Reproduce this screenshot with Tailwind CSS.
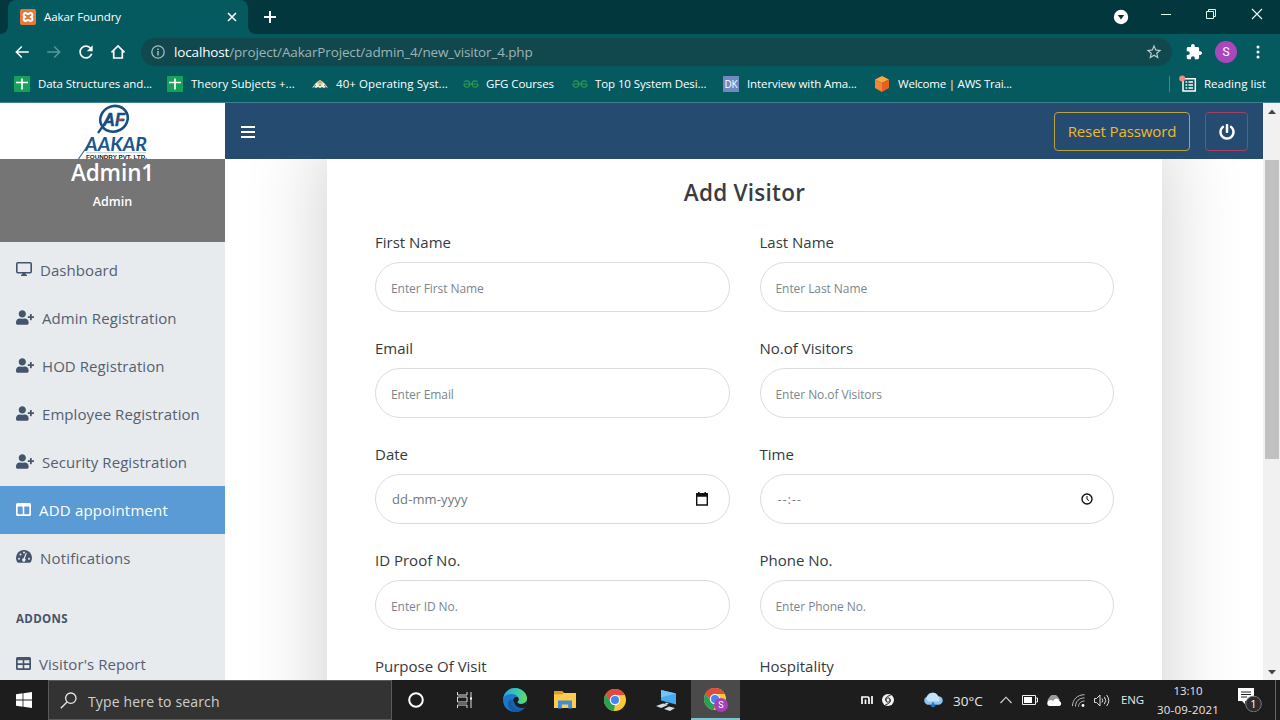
<!DOCTYPE html>
<html lang="en">
<head>
<meta charset="utf-8">
<title>Aakar Foundry</title>
<script src="https://cdn.jsdelivr.net/npm/@tailwindcss/browser@4"></script>
</head>
<body class="w-[1280px] h-[720px] overflow-hidden flex flex-col bg-white font-['Open_Sans',sans-serif]">

<svg class="hidden">
  <symbol id="userplus" viewBox="0 0 640 512"><path d="M624 208h-64v-64c0-8.800-7.200-16-16-16h-32c-8.800 0-16 7.200-16 16v64h-64c-8.800 0-16 7.200-16 16v32c0 8.800 7.200 16 16 16h64v64c0 8.800 7.200 16 16 16h32c8.800 0 16-7.200 16-16v-64h64c8.800 0 16-7.200 16-16v-32c0-8.800-7.200-16-16-16zm-400 48c70.700 0 128-57.300 128-128S294.700 0 224 0 96 57.300 96 128s57.300 128 128 128zm89.600 32h-16.700c-22.200 10.200-46.900 16-72.900 16s-50.600-5.800-72.900-16h-16.700C60.200 288 0 348.200 0 422.400V464c0 26.500 21.500 48 48 48h352c26.500 0 48-21.500 48-48v-41.600c0-74.200-60.200-134.400-134.400-134.400z"/></symbol>
  <symbol id="sheet" viewBox="0 0 16 16"><rect width="16" height="16" rx="1" fill="#17a05a"/><path d="M8 2.500v11M2 6.500h12" stroke="#fff" stroke-width="1.700"/></symbol>
  <symbol id="gfg" viewBox="0 0 16 8"><path d="M1.400 1.800C2 1.100 2.800.8 3.800.8 5.700.8 6.900 2 6.900 4S5.700 7.200 3.900 7.200 1 6 1 4h14M14.600 1.800C14 1.100 13.200.8 12.200.8 10.300.8 9.100 2 9.100 4s1.200 3.200 3 3.200S15 6 15 4" fill="none" stroke="#2f9a4d" stroke-width="1.200"/></symbol>
  <symbol id="chrome" viewBox="0 0 22 22"><circle cx="11" cy="11" r="11" fill="#fbc934"/><path d="M11 6h9.800A11 11 0 0 0 1.500 5.500L6 12z" fill="#df4b3f"/><path d="M1.500 5.500 7 13.500 11 16 9.800 22A11 11 0 0 1 1.500 5.500z" fill="#28a156"/><circle cx="11" cy="11" r="5.200" fill="#f5f5f5"/><circle cx="11" cy="11" r="4" fill="#4285f4"/></symbol>
</svg>

<!-- Tab strip -->
<div class="h-[34px] shrink-0 bg-[#02383d] flex text-white">
  <div class="w-2 flex items-end bg-[#055a60]"><div class="w-2 h-[34px] bg-[#02383d] rounded-br-lg"></div></div>
  <div class="w-[240px] h-[34px] bg-[#055a60] rounded-t-lg flex items-center pl-3 pr-[10px]">
    <svg class="w-4 h-4" viewBox="0 0 16 16"><rect width="16" height="16" rx="2" fill="#e9793a"/><path d="M5.300 8a2 2 0 1 1 2-3h1.400a2 2 0 1 1 2 3 2 2 0 1 1-2 3H7.300a2 2 0 1 1-2-3z" fill="none" stroke="#fff" stroke-width="2" stroke-linejoin="round"/></svg>
    <span class="ml-2 text-[11.500px] leading-4 tracking-[-0.1px]">Aakar Foundry</span>
    <svg class="ml-auto w-3 h-3" viewBox="0 0 12 12"><path d="M2 2l8 8M10 2l-8 8" stroke="#fff" stroke-width="1.600"/></svg>
  </div>
  <div class="w-2 bg-[#055a60]"><div class="w-2 h-[34px] bg-[#02383d] rounded-bl-lg"></div></div>
  <svg class="mt-[11px] ml-[8px] w-3 h-3" viewBox="0 0 12 12"><path d="M6 0v12M0 6h12" stroke="#fff" stroke-width="2"/></svg>
  <div class="ml-auto flex">
    <svg class="mt-[9px] w-4 h-4" viewBox="0 0 16 16"><circle cx="8" cy="8" r="7.200" fill="#fff"/><path d="M4.800 6h6.400L8 10.500z" fill="#02383d"/></svg>
    <svg class="mt-[9px] ml-[31px] w-3 h-3" viewBox="0 0 12 12"><path d="M1 5.500h10" stroke="#dfe" stroke-width="1"/></svg>
    <svg class="mt-[8px] ml-[33px] w-3 h-3" viewBox="0 0 12 12"><path d="M1.500 3.500h7v7h-7zM3.500 3.500v-2h7v7h-2" stroke="#dfe" fill="none"/></svg>
    <svg class="mt-[8px] ml-[34px] mr-[17px] w-3 h-3" viewBox="0 0 12 12"><path d="M1 1l10 10M11 1L1 11" stroke="#eff" stroke-width="1.100"/></svg>
  </div>
</div>

<!-- Toolbar -->
<div class="h-9 shrink-0 bg-[#055a60] flex items-center pl-[6px] text-white fill-white">
  <svg class="w-[18px] h-[18px] mx-[7px]" viewBox="0 0 24 24"><path d="M21 11H6.830l5.590-5.590L11 4l-8 8 8 8 1.410-1.410L6.830 13H21v-2z"/></svg>
  <svg class="w-[18px] h-[18px] mx-[7px] fill-[#5a979b]" viewBox="0 0 24 24"><path d="M3 11h14.170l-5.590-5.590L13 4l8 8-8 8-1.410-1.410L17.170 13H3v-2z"/></svg>
  <svg class="w-5 h-5 mx-[6px]" viewBox="0 0 24 24"><path d="M17.650 6.350C16.200 4.900 14.210 4 12 4c-4.420 0-7.990 3.580-7.990 8s3.570 8 7.990 8c3.730 0 6.840-2.550 7.730-6h-2.080c-.82 2.330-3.040 4-5.650 4-3.310 0-6-2.690-6-6s2.690-6 6-6c1.660 0 3.140.69 4.220 1.780L13 11h7V4l-2.350 2.350z"/></svg>
  <svg class="w-4 h-4 mx-2" viewBox="0 0 16 16"><path d="M1.500 8.300 8 2l6.500 6.300M3.700 7v7h8.600V7" fill="none" stroke="#fff" stroke-width="1.700"/></svg>
  <div class="w-[1031px] h-7 ml-[7px] rounded-full bg-[#11484e] flex items-center pl-[10px] pr-[9px]">
    <svg class="w-[14px] h-[14px]" viewBox="0 0 14 14"><circle cx="7" cy="7" r="6.200" fill="none" stroke="#a5bcbe" stroke-width="1.300"/><path d="M7 6v4.500M7 3.400v1.500" stroke="#a5bcbe" stroke-width="1.500"/></svg>
    <span class="ml-[9px] text-[13.500px] tracking-[-0.15px] leading-5 text-[#9db4b6] whitespace-nowrap"><span class="text-white">localhost</span>/project/AakarProject/admin_4/new_visitor_4.php</span>
    <svg class="ml-auto w-[18px] h-[18px] fill-[#b9cccd]" viewBox="0 0 24 24"><path d="M22 9.240l-7.190-.62L12 2 9.190 8.630 2 9.240l5.460 4.730L5.820 21 12 17.270 18.180 21l-1.630-7.030L22 9.240zM12 15.400l-3.760 2.270 1-4.280-3.320-2.880 4.380-.38L12 6.100l1.710 4.040 4.380.38-3.320 2.880 1 4.280L12 15.400z"/></svg>
  </div>
  <svg class="w-4 h-4 ml-[14px]" viewBox="1 1 22 22"><path d="M20.500 11H19V7c0-1.100-.9-2-2-2h-4V3.500C13 2.120 11.880 1 10.500 1S8 2.120 8 3.500V5H4c-1.100 0-1.990.9-1.990 2v3.800H3.500c1.490 0 2.700 1.210 2.700 2.700s-1.210 2.700-2.700 2.700H2V20c0 1.100.9 2 2 2h3.800v-1.500c0-1.490 1.210-2.700 2.700-2.700 1.490 0 2.700 1.210 2.700 2.700V22H17c1.100 0 2-.9 2-2v-4h1.500c1.380 0 2.500-1.120 2.500-2.500S21.880 11 20.500 11z"/></svg>
  <div class="w-[22px] h-[22px] ml-[13px] rounded-full bg-[#aa47bc] flex items-center justify-center text-[12px] font-[Roboto,sans-serif]">S</div>
  <svg class="w-4 h-4 ml-[13px]" viewBox="0 0 16 16"><circle cx="8" cy="3" r="1.500"/><circle cx="8" cy="8" r="1.500"/><circle cx="8" cy="13" r="1.500"/></svg>
</div>

<!-- Bookmarks -->
<div class="h-[33px] shrink-0 bg-[#055a60] border-b border-[#3f7f90] flex items-center pl-[14px] pb-[4px] text-white text-[11.500px] leading-4 whitespace-nowrap tracking-[-0.1px]">
  <div class="w-[153px] flex items-center gap-2"><svg class="w-4 h-4"><use href="#sheet"/></svg>Data Structures and...</div>
  <div class="w-[145px] flex items-center gap-2"><svg class="w-4 h-4"><use href="#sheet"/></svg><span class="tracking-[0px]">Theory Subjects +...</span></div>
  <div class="w-[151px] flex items-center gap-2"><svg class="w-4 h-4" viewBox="0 0 16 16"><path d="M0 12 3 8l2-2 3-2 3 2 2 2 3 4-2-1-2 1-2-1-2 1-2-1-2 1-2-1z" fill="#f1f1e8"/><path d="M5 7l3-2.500L11 7l-1.500 1L8 7 6.500 8z" fill="#e8a33c"/><path d="M2 10.500l2-1.500M7 10l1-1.500 1 1.500M12 9l2 1.500" stroke="#3c8a6a" fill="none"/></svg><span class="tracking-[0.08px]">40+ Operating Syst...</span></div>
  <div class="w-[109px] flex items-center gap-[7px]"><svg class="w-4 h-2"><use href="#gfg"/></svg>GFG Courses</div>
  <div class="w-[151px] flex items-center gap-[7px]"><svg class="w-4 h-2"><use href="#gfg"/></svg>Top 10 System Desi...</div>
  <div class="w-[151px] flex items-center gap-2"><span class="w-4 h-4 bg-[#7089c0] text-[10px] leading-4 text-center tracking-tight">DK</span>Interview with Ama...</div>
  <div class="flex items-center gap-2"><svg class="w-4 h-4" viewBox="0 0 16 16"><path d="M8 0l7 3.500L8 7 1 3.500z" fill="#ffa63a"/><path d="M1 3.500L8 7v9l-7-4z" fill="#f58536"/><path d="M15 3.500L8 7v9l7-4z" fill="#e8601c"/></svg><span class="tracking-[-0.22px]">Welcome | AWS Trai...</span></div>
  <div class="ml-auto mr-[14px] flex items-center">
    <div class="w-px h-4 bg-[#4a8589] mr-[9px]"></div>
    <svg class="w-[18px] h-[18px] mr-[7px]" viewBox="0 0 18 18"><path d="M4 5v11h12.300V3.800H6" fill="none" stroke="#fff" stroke-width="1.500"/><path d="M6.500 7h1.700M6.500 10h1.700M6.500 13h1.700M9.500 7H14M9.500 10H14M9.500 13H14" stroke="#fff" stroke-width="1.300"/><circle cx="3.200" cy="3.500" r="3" fill="#ee8d83"/></svg>
    <span class="tracking-[0.04px]">Reading list</span>
  </div>
</div>

<!-- Page -->
<div class="h-[577px] shrink-0 flex">
  <aside class="w-[225px] bg-[#e8ebee] flex flex-col shrink-0 overflow-hidden text-[#44546a]">
    <div class="h-14 shrink-0 bg-white flex justify-center">
      <svg class="w-[72px] h-14" viewBox="0 0 72 56">
        <ellipse cx="37" cy="15.800" rx="14" ry="12.600" transform="rotate(-25 37 15.800)" fill="none" stroke="#164f86" stroke-width="2.600"/>
        <path d="M21 30 33 13" stroke="#164f86" stroke-width="2.200"/>
        <text x="26" y="22.500" font-family="Liberation Sans" font-weight="bold" font-style="italic" font-size="17.500" textLength="22" lengthAdjust="spacingAndGlyphs" fill="#164f86" stroke="#164f86" stroke-width=".5">AF</text>
        <path d="M41 17.500l5-1.500" stroke="#d83a3a" stroke-width="1.800"/>
        <path d="M1.500 56 15.500 35.500" stroke="#3f719e" stroke-width="1.200"/>
        <text x="8" y="48" font-family="Lato" font-weight="bold" font-style="italic" font-size="18.500" textLength="62" lengthAdjust="spacingAndGlyphs" fill="#1c568c">AAKAR</text>
        <path d="M9 49.700h60" stroke="#8fa9c0" stroke-width=".6"/>
        <text x="9" y="55.500" font-family="Liberation Sans" font-weight="bold" font-size="5.300" textLength="61" lengthAdjust="spacingAndGlyphs" fill="#222">FOUNDRY PVT. LTD.</text>
      </svg>
    </div>
    <div class="h-[83px] shrink-0 bg-[#757575] text-white text-center font-semibold">
      <div class="text-[22.500px] leading-7 tracking-[-0.1px]">Admin1</div>
      <div class="mt-[6px] text-[12.500px] leading-[18px]">Admin</div>
    </div>
    <nav class="pt-1 text-[15px] tracking-[0.07px] whitespace-nowrap text-[#55606e] [&>a>svg]:-mt-[2px] [&>a>svg]:mb-[1px] [&>a]:pt-[1px]">
      <a class="h-12 flex items-center pl-4 gap-2"><svg class="w-4 h-4" viewBox="0 0 16 16"><rect x=".8" y="1.800" width="14.400" height="10" rx="1" fill="none" stroke="#44546a" stroke-width="1.600"/><path d="M6.500 12h3l.5 1.800h1v1.200H5v-1.200h1z" fill="#44546a"/></svg>Dashboard</a>
      <a class="h-12 flex items-center pl-4 gap-2"><svg class="w-[18px] h-[15px] fill-[#44546a]"><use href="#userplus"/></svg>Admin Registration</a>
      <a class="h-12 flex items-center pl-4 gap-2"><svg class="w-[18px] h-[15px] fill-[#44546a]"><use href="#userplus"/></svg>HOD Registration</a>
      <a class="h-12 flex items-center pl-4 gap-2"><svg class="w-[18px] h-[15px] fill-[#44546a]"><use href="#userplus"/></svg>Employee Registration</a>
      <a class="h-12 flex items-center pl-4 gap-2"><svg class="w-[18px] h-[15px] fill-[#44546a]"><use href="#userplus"/></svg>Security Registration</a>
      <a class="h-12 flex items-center pl-4 gap-2 bg-[#5b9bd5] text-white"><svg class="w-[15px] h-[15px]" viewBox="0 0 15 15"><path d="M1.500 1h12A1.500 1.500 0 0 1 15 2.500v10a1.500 1.500 0 0 1-1.500 1.500h-12A1.500 1.500 0 0 1 0 12.500v-10A1.500 1.500 0 0 1 1.500 1zM1.700 4.500v7.700h5V4.500zM8.300 4.500v7.700h5V4.500z" fill="#fff" fill-rule="evenodd"/></svg><span class="tracking-[0.2px]">ADD appointment</span></a>
      <a class="h-12 flex items-center pl-4 gap-2"><svg class="w-4 h-4" viewBox="0 0 16 16"><path d="M8 1a8 8 0 0 0-6.900 12q.5.800 1.300.8h11.200q.8 0 1.300-.8A8 8 0 0 0 8 1z" fill="#44546a"/><g fill="#e8ebee"><circle cx="3" cy="9.700" r="1"/><circle cx="4.500" cy="5.500" r="1"/><circle cx="8" cy="3.500" r="1"/><circle cx="13" cy="9.700" r="1"/><path d="M10.800 4 8.900 9.600a1.700 1.700 0 1 1-1.300-.3L9.800 3.800z"/></g></svg><span class="tracking-[0.18px]">Notifications</span></a>
      <div class="pt-[26px] pl-4 text-[11.500px] tracking-[0.35px] leading-[22px] font-bold text-[#44546a]">ADDONS</div>
      <a class="mt-[10px] h-12 flex items-center pl-4 gap-2"><svg class="w-[15px] h-[15px]" viewBox="0 0 15 15"><path d="M1.500 1h12A1.500 1.500 0 0 1 15 2.500v10a1.500 1.500 0 0 1-1.500 1.500h-12A1.500 1.500 0 0 1 0 12.500v-10A1.500 1.500 0 0 1 1.500 1zM1.700 4.300v3h5v-3zM8.300 4.300v3h5v-3zM1.700 8.900v3.300h5V8.900zM8.300 8.900v3.300h5V8.900z" fill="#44546a" fill-rule="evenodd"/></svg>Visitor's Report</a>
    </nav>
  </aside>

  <main class="w-[1038px] shrink-0 flex flex-col">
    <header class="h-14 shrink-0 bg-[#264b70] flex items-center pl-4 pr-[15px]">
      <svg class="w-[14px] h-[14px] mt-[2px]" viewBox="0 0 14 14"><path d="M0 2h14M0 7h14M0 12h14" stroke="#fff" stroke-width="2.200"/></svg>
      <div class="ml-auto w-[136px] h-[39px] mt-[1px] rounded-[4px] border border-[#b9a43e] text-[#f0b82c] text-[15px] tracking-[-0.1px] flex items-center justify-center whitespace-nowrap">Reset Password</div>
      <div class="ml-[15px] w-[43px] h-[39px] mt-[1px] rounded-[4px] border border-[#a63e60] flex items-center justify-center"><svg class="w-4 h-4 fill-white" viewBox="0 0 512 512"><path d="M400 54.100c63 45 104 118.600 104 201.900 0 136.800-110.800 247.700-247.500 248C120 504.300 8.200 393 8 256.400 7.900 173.100 48.900 99.300 111.800 54.200c11.700-8.300 28-4.800 35 7.700L162.600 90c5.900 10.500 3.100 23.800-6.600 31-41.500 30.800-68 79.600-68 134.900-.1 92.300 74.500 168.100 168 168.100 91.600 0 168.600-74.200 168-169.100-.3-51.800-24.700-101.800-68.100-134-9.700-7.200-12.400-20.500-6.500-30.900l15.800-28.100c7-12.400 23.200-16.100 34.800-7.800zM296 264V24c0-13.300-10.700-24-24-24h-32c-13.300 0-24 10.700-24 24v240c0 13.300 10.700 24 24 24h32c13.300 0 24-10.700 24-24z"/></svg></div>
    </header>
    <div class="grow overflow-hidden pl-[102px]">
      <section class="-mt-5 w-[835px] h-[900px] bg-white pt-9 px-12 shadow-[0_0_76px_rgba(0,0,0,0.2)] text-[15px] text-[#343a40]">
        <h1 class="text-center text-[22.500px] tracking-[0.25px] leading-9 font-semibold text-[#3a3c42]">Add Visitor</h1>
        <div class="mt-5 grid grid-cols-2 gap-x-[30px] [&>label]:h-[106px] [&>label]:block [&_span]:block [&_span]:leading-[23px] [&_div]:text-[#7b858e] [&_div]:tracking-[-0.07px]">
          <label><span>First Name</span><div class="mt-[8px] h-[50px] rounded-[25px] border border-[#d9dddd] px-[15px] flex items-center text-[12px] pt-[3px]">Enter First Name</div></label>
          <label><span>Last Name</span><div class="mt-[8px] h-[50px] rounded-[25px] border border-[#d9dddd] px-[15px] flex items-center text-[12px] pt-[3px]">Enter Last Name</div></label>
          <label><span>Email</span><div class="mt-[8px] h-[50px] rounded-[25px] border border-[#d9dddd] px-[15px] flex items-center text-[12px] pt-[3px]">Enter Email</div></label>
          <label><span>No.of Visitors</span><div class="mt-[8px] h-[50px] rounded-[25px] border border-[#d9dddd] px-[15px] flex items-center text-[12px] pt-[3px]">Enter No.of Visitors</div></label>
          <label><span>Date</span><div class="mt-[8px] h-[50px] rounded-[25px] border border-[#d9dddd] pl-4 pr-5 flex items-center justify-between text-[13px]"><p class="pt-[2px] tracking-[0.12px] text-[#6f7880]">dd-mm-yyyy</p><svg class="w-[14px] h-4" viewBox="0 0 14 16"><path d="M1.700 3h10.600v11H1.700z" fill="none" stroke="#111" stroke-width="1.400"/><path d="M1 2.300h12v3.400H1zM3 1h1.500v2H3zM9.500 1H11v2H9.500z" fill="#111"/></svg></div></label>
          <label><span>Time</span><div class="mt-[8px] h-[50px] rounded-[25px] border border-[#d9dddd] pl-[17px] pr-5 flex items-center justify-between text-[13px]"><p class="pt-[2px] tracking-[0.8px]">--:--</p><svg class="w-3 h-3" viewBox="0 0 12 12"><circle cx="6" cy="6" r="5" fill="none" stroke="#111" stroke-width="1.400"/><path d="M6 3v3.200l2 1.500" fill="none" stroke="#111"/></svg></div></label>
          <label><span>ID Proof No.</span><div class="mt-[8px] h-[50px] rounded-[25px] border border-[#d9dddd] px-[15px] flex items-center text-[12px] pt-[3px]">Enter ID No.</div></label>
          <label><span>Phone No.</span><div class="mt-[8px] h-[50px] rounded-[25px] border border-[#d9dddd] px-[15px] flex items-center text-[12px] pt-[3px]">Enter Phone No.</div></label>
          <label><span>Purpose Of Visit</span></label>
          <label><span>Hospitality</span></label>
        </div>
      </section>
    </div>
  </main>

  <!-- Scrollbar -->
  <div class="w-[17px] bg-[#f1f1f1] flex flex-col items-center pt-[6px] pb-[5px]">
    <svg class="w-2 h-[5px]" viewBox="0 0 8 5"><path d="M0 5l4-4.500L8 5z" fill="#444"/></svg>
    <div class="w-[14px] h-[299px] bg-[#c1c1c1] mt-[46px]"></div>
    <svg class="w-2 h-[5px] mt-auto" viewBox="0 0 8 5"><path d="M0 0l4 4.500L8 0z" fill="#444"/></svg>
  </div>
</div>

<!-- Taskbar -->
<div class="h-10 shrink-0 bg-[#1d1d1d] flex items-center text-[#e8e8e8]">
  <div class="w-12 flex justify-center"><svg class="w-4 h-4" viewBox="0 0 16 16"><path d="M0 2.200 6.600 1.300V7.600H0zM7.400 1.200 16 0v7.600H7.400zM0 8.400h6.600v6.300L0 13.800zM7.400 8.400H16V16l-8.600-1.200z" fill="#fff"/></svg></div>
  <div class="w-[344px] h-10 bg-[#333] border border-[#5a5a5a] flex items-center pl-[11px] text-[14px] tracking-[0.15px] text-[#cfcfcf]">
    <svg class="w-[17px] h-[17px] mr-[11px]" viewBox="0 0 17 17"><circle cx="10.800" cy="6.200" r="5.200" fill="none" stroke="#e8e8e8" stroke-width="1.300"/><path d="M7 10 .8 16.200" stroke="#e8e8e8" stroke-width="1.300"/></svg><span class="pt-[2px]">Type here to search</span></div>
  <div class="w-12 flex justify-center"><svg class="w-4 h-4" viewBox="0 0 16 16"><circle cx="8" cy="8" r="6.800" fill="none" stroke="#fff" stroke-width="2"/></svg></div>
  <div class="w-[49px] flex justify-center"><svg class="w-4 h-4" viewBox="0 0 16 16"><path d="M.5 0v3h9.500V0M.5 5h9.500v5H.5zM.5 16v-3h9.500v3M14 0v16" fill="none" stroke="#ddd"/><path d="M1 10h9v3H1z" fill="#666"/><path d="M13 5.500h2v2h-2z" fill="#fff"/></svg></div>
  <div class="w-[51px] flex justify-center"><svg class="w-6 h-6" viewBox="0 0 24 24">
    <defs><linearGradient id="eg" x1="0" x2="1"><stop stop-color="#2aa5dc"/><stop offset=".6" stop-color="#3bc9b0"/><stop offset="1" stop-color="#67dc5a"/></linearGradient></defs>
    <circle cx="12" cy="12" r="12" fill="#1b78c8"/><path d="M.2 10.500C1.200 4 6.500 0 12 0c7 0 12 5.500 12 10.500 0 3.500-3 5.500-6 5.500-2.500 0-4-.9-3.500-1.900.9-1.200 1.500-2.100 1-4.100C14.500 7.500 11.500 6 8.500 6 5 6 1.500 8 .2 10.500z" fill="url(#eg)"/><path d="M8.500 12c-.5 5 4 9 8.500 9 2 0 4-.8 5-1.500A12 12 0 0 1 12 24C7 23 3 18 6 12.500z" fill="#155aa5"/><path d="M15.500 10c1 2-.7 3.200-1 4.100-.5 1 1 1.900 3.500 1.900 2.200 0 4.500-1 5.500-3 .5 2-.2 4.500-1.500 6.400-5 2.500-12 .8-12-6.400 0-2 1-3.200 2.500-4 1.200-.3 2.400 0 3 1z" fill="#1d1d1d"/><path d="M8.500 11c-1.500 4 .5 9.500 7 11 3 .2 5-1 6.500-2.500-5 1.500-10-.5-11-6z" fill="#1763ae"/></svg></div>
  <div class="w-[50px] flex justify-center"><svg class="w-[22px] h-[18px]" viewBox="0 0 22 18"><path d="M0 1q0-1 1-1h7l2 2h12v15H0z" fill="#ffcb4f"/><path d="M0 1q0-1 1-1h7l1.500 2L8 3.500H0z" fill="#e09c1e"/><path d="M4 17.500V9.500h14v8h-3.800V13.500H7.800v4z" fill="#3f8fd5"/></svg></div>
  <div class="w-[50px] flex justify-center"><svg class="w-[22px] h-[22px]"><use href="#chrome"/></svg></div>
  <div class="w-[51px] flex justify-center"><svg class="w-[22px] h-[22px]" viewBox="0 0 22 22"><path d="M6 1l15 3.500v11L6 11.500z" fill="#46aaf0"/><path d="M6 1l15 3.500-15 4z" fill="#72c4fa"/><path d="M1 17l7-2.500 5 1.500-7 3zM9 20l5-2.500 6 1.500-5 3z" fill="#d8dde2"/><path d="M11 13.500l3 1-3 1.500-2-.5z" fill="#ccc"/></svg></div>
  <div class="w-[49px] h-10 bg-[#4a4a4a] border-b-2 border-[#7cc5cf] flex justify-center items-center">
    <svg class="w-6 h-6 mt-[2px]" viewBox="0 0 24 24"><use href="#chrome" width="22" height="22"/><circle cx="17" cy="17" r="7" fill="#a63fb8"/><text x="17" y="20.300" text-anchor="middle" font-family="Roboto" font-size="9" fill="#fff">S</text></svg></div>
  <div class="ml-auto flex items-center text-[12.500px] whitespace-nowrap">
    <svg class="w-3 h-2" viewBox="0 0 12 8"><path d="M1 8V1h5.500q1.500 0 1.500 1.500V8M4.500 3.500V8M11 0v8" fill="none" stroke="#fff" stroke-width="1.700"/></svg>
    <svg class="ml-[9px] w-3 h-3" viewBox="0 0 12 12"><circle cx="6" cy="6" r="6" fill="#f2f2f2"/><path d="M8.500 1.500C3 2 2.500 7 5 8c2 .6 3.400-1.200 2.500-2.700M3.500 10.500C9 10 9.500 5 7 4 5 3.400 3.600 5.200 4.500 6.700" fill="none" stroke="#222"/></svg>
    <svg class="ml-[28px] w-[21px] h-[17px]" viewBox="0 0 20 16"><path d="M5 12a4 4 0 0 1-.5-7.500A6 6 0 0 1 15.500 4 4 4 0 0 1 16 12z" fill="#8cc4f2"/><path d="M6 9a3.500 3.500 0 0 1 0-6 5 5 0 0 1 9 1 3 3 0 0 1 1 5z" fill="#c6e2f9"/><path d="M10.500 9l2 3.500a2 2 0 1 1-4 0z" fill="#2476cf"/></svg>
    <span class="ml-[10px] w-[30px] text-[13.500px] pt-[2px]">30°C</span>
    <svg class="ml-[17px] w-3 h-2" viewBox="0 0 12 8"><path d="M.5 7 6 1.200 11.500 7" fill="none" stroke="#ddd" stroke-width="1.100"/></svg>
    <svg class="ml-[10px] w-4 h-[10px]" viewBox="0 0 16 10"><path d="M.5.5h13v9H.5zM13.500 3H15.500v4h-2" fill="none" stroke="#eee"/><path d="M2 2h8v6H2z" fill="#fff"/></svg>
    <svg class="ml-2 w-4 h-[11px]" viewBox="0 0 16 11"><path d="M3 8a3 3 0 0 1 0-5 5 5 0 0 1 9-1l2 3z" fill="#9a9a9a"/><path d="M3 11a3 3 0 0 1 0-5.500q2-1 4 .5 4-5 7 .5A2.500 2.500 0 0 1 13.500 11z" fill="#fff"/></svg>
    <svg class="ml-[10px] w-[13px] h-[13px]" viewBox="0 0 13 13"><path d="M.5 12C.5 5.500 5.500.7 12.500.7M3.500 12.500C3.500 7.500 7 3.900 12.500 3.900M6.500 12.700C6.500 9.500 9 7 12.500 7" fill="none" stroke="#bbb"/><circle cx="11" cy="11.500" r="1.400" fill="#fff"/></svg>
    <svg class="ml-[9px] w-4 h-[13px]" viewBox="0 0 16 13"><path d="M.5 4.500h2l3.500-3.500v11L2.500 8.500h-2zM8 4.500q1.500 2 0 4M10.300 2.800q3 3.700 0 7.400M12.600 1q4.400 5.500 0 11" fill="none" stroke="#ddd"/></svg>
    <span class="ml-[11px] w-[24px] text-[11.500px] tracking-[-0.2px]">ENG</span>
    <div class="ml-[10px] w-[66px] text-center text-[11.500px] leading-[19px] tracking-[0.2px]"><span class="tracking-[-0.1px]">13:10</span><br>30-09-2021</div>
    <svg class="ml-[17px] w-6 h-6" viewBox="0 0 24 24"><path d="M0 0h16v13H7v3l-3-3H0z" fill="#fff"/><path d="M3 4h10M3 6.500h10M3 9h6" stroke="#222"/><circle cx="15.500" cy="16" r="7.800" fill="#2c2c2c" stroke="#777"/><text x="15.500" y="20" text-anchor="middle" font-size="11" font-family="Open Sans" fill="#fff">1</text></svg>
    <div class="ml-[13px] mr-1 w-px h-10 bg-[#666]"></div>
  </div>
</div>
</body>
</html>
